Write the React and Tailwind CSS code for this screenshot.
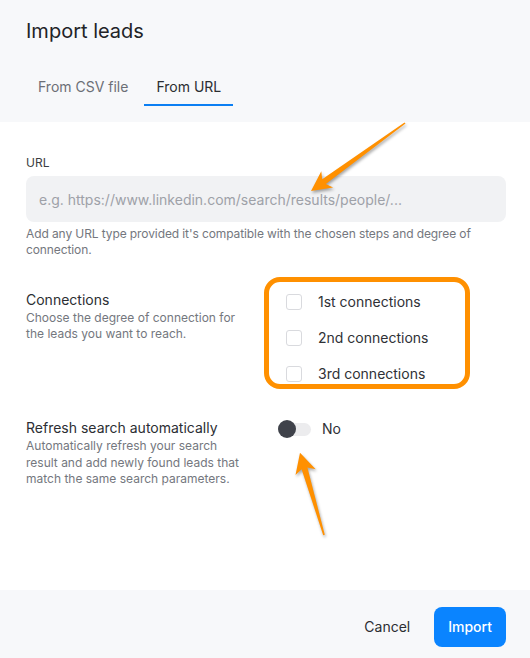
import React from 'react';

const font = { fontFamily: 'Inter, "Noto Sans", sans-serif' };

function Arrow({ points }) {
  return (
    <polygon points={points} fill="#ff9000" />
  );
}

function Checkbox({ label }) {
  return (
    <label className="flex items-center h-5 cursor-pointer">
      <span className="w-4 h-4 rounded-[3px] border border-[#d9dade] bg-white"></span>
      <span className="ml-4 text-sm text-[#2f3136]">{label}</span>
    </label>
  );
}

export default function App() {
  return (
    <div className="relative w-[530px] h-[658px] flex flex-col bg-white overflow-hidden" style={font}>
      {/* header */}
      <div className="bg-[#f7f8fa] px-[26px] pt-[17px] pb-4">
        <h1 className="text-xl leading-7 text-[#222327]">Import leads</h1>
        <div className="flex gap-1 mt-6">
          <button className="px-3 pt-2 pb-[7px] text-sm text-[#6c6f76] border-b-2 border-transparent">From CSV file</button>
          <button className="px-3 pt-2 pb-[7px] text-sm text-[#2b2d31] border-b-2 border-[#0b7ff3]">From URL</button>
        </div>
      </div>

      {/* body */}
      <div className="flex-1 pl-[26px] pr-6 pt-[33px]">
        <div className="text-xs leading-4 text-[#3b3d42]">URL</div>
        <input
          className="mt-[5px] w-full h-[46px] rounded-lg bg-[#f1f2f4] px-[13px] text-sm text-[#2b2d31] placeholder:text-[#9ea1a8] outline-none"
          placeholder="e.g. https://www.linkedin.com/search/results/people/..."
        />
        <p className="mt-1 text-xs leading-4 text-[#74777e] tracking-[-0.1px]">
          Add any URL type provided it's compatible with the chosen steps and degree of connection.
        </p>

        <div className="flex mt-8">
          <div className="w-[218px] shrink-0">
            <div className="text-sm text-[#2c2e33]">Connections</div>
            <p className="text-xs leading-4 text-[#74777e]">Choose the degree of connection for the leads you want to reach.</p>
          </div>
          <div className="ml-[35px] pl-[7px] pt-[2px] flex flex-col gap-4">
            <Checkbox label="1st connections" />
            <Checkbox label="2nd connections" />
            <Checkbox label="3rd connections" />
          </div>
        </div>

        <div className="flex mt-[34px]">
          <div className="w-[218px] shrink-0">
            <div className="text-sm text-[#2c2e33]">Refresh search automatically</div>
            <p className="text-xs leading-[16.5px] text-[#74777e]">Automatically refresh your search result and add newly found leads that match the same search parameters.</p>
          </div>
          <div className="ml-[34px] flex items-center h-6 -mt-[1px]">
            <span className="relative w-[33px] h-[13px] rounded-full bg-[#ececee] flex items-center">
              <span className="absolute left-0 w-[18px] h-[18px] rounded-full bg-[#3f424a]"></span>
            </span>
            <span className="ml-[11px] text-sm text-[#2f3136]">No</span>
          </div>
        </div>
      </div>

      {/* footer */}
      <div className="h-[68px] bg-[#f7f8fa] flex justify-end items-start pt-[17px] px-6 gap-2">
        <button className="h-10 px-4 text-sm text-[#2b2d31]">Cancel</button>
        <button className="h-10 px-[14px] rounded-lg bg-[#0a84ff] text-sm font-medium text-white">Import</button>
      </div>

      {/* annotation overlay */}
      <div className="absolute left-[264px] top-[277px] w-[206px] h-[112px] rounded-[16px] border-[5px] border-[#ff9000] pointer-events-none"></div>
      <svg className="absolute inset-0 pointer-events-none drop-shadow-[1px_2px_1.5px_rgba(0,0,0,0.35)]" width="530" height="658">
        <Arrow points="311,191 321.3,171.2 322.2,179.2 404.5,122.4 405.5,123.6 325.8,184 333.1,187.4" />
        <Arrow points="300,452.7 315.7,469.2 307.4,467.6 324.8,534.8 323.2,535.2 301.6,469.2 295.5,475.1" />
      </svg>
    </div>
  );
}
